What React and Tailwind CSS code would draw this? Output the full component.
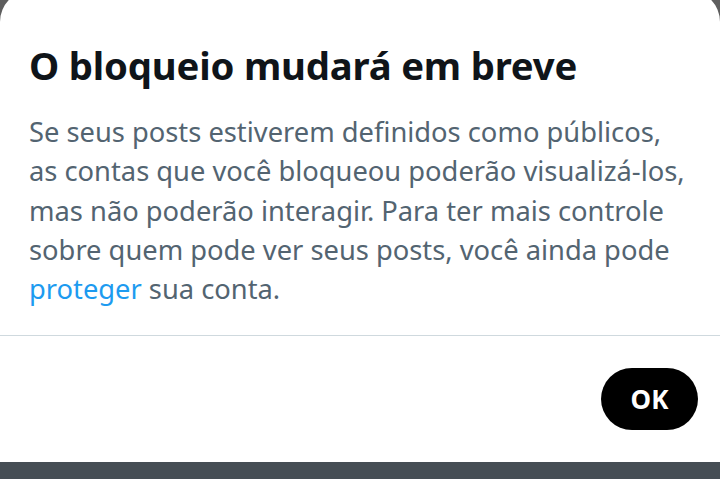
import React from "react";

const App = () => {
  return (
    <div
      className="h-screen w-full overflow-hidden bg-[#5e5e5e] flex flex-col"
      style={{ fontFamily: '"Noto Sans", "Open Sans", sans-serif' }}
    >
      {/* Dialog card */}
      <div className="flex-1 -mt-[10px] bg-white rounded-t-[32px] flex flex-col">
        <div className="px-[29px] pt-[52px]">
          <h1 className="text-[38.3px] leading-[46px] font-bold text-[#0f1419] tracking-[-0.2px]">
            O bloqueio mudará em breve
          </h1>
          <p className="mt-[24px] text-[27.3px] leading-[39.3px] text-[#536471]">
            Se seus posts estiverem definidos como públicos,
            <br />
            as contas que você bloqueou poderão visualizá-los,
            <br />
            mas não poderão interagir. Para ter mais controle
            <br />
            sobre quem pode ver seus posts, você ainda pode
            <br />
            <span className="text-[#1d9bf0]">proteger</span> sua conta.
          </p>
        </div>

        <div className="mt-auto border-t border-[#cfd9de] h-[127px] flex items-center justify-end pr-[22px]">
          <button className="h-[62px] w-[97px] rounded-full bg-black text-white text-[26px] font-bold">
            OK
          </button>
        </div>
      </div>

      {/* Bottom bar */}
      <div className="h-[17px] bg-[#454d54]" />
    </div>
  );
};

export default App;
